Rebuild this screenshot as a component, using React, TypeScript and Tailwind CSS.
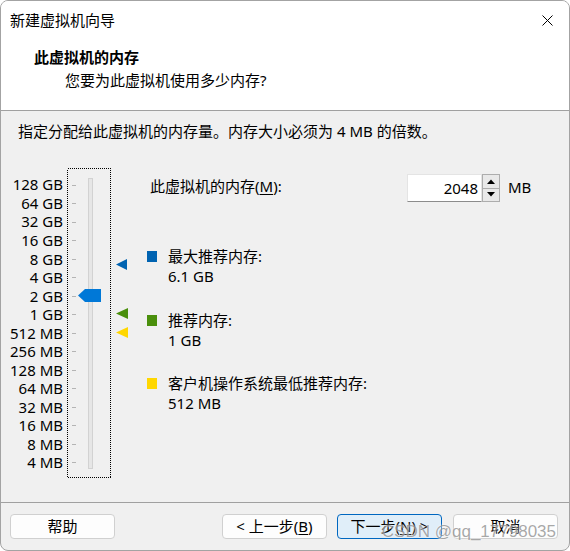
import React from 'react';

const sizes = [
  '128 GB', '64 GB', '32 GB', '16 GB', '8 GB', '4 GB', '2 GB', '1 GB',
  '512 MB', '256 MB', '128 MB', '64 MB', '32 MB', '16 MB', '8 MB', '4 MB',
];

const STEP = 18.53;

// slider drawing: dotted focus box, track, ticks, thumb and the three markers
const MemorySlider = () => (
  <svg width="63" height="310" viewBox="0 0 63 310" className="shrink-0 ml-[3px]">
    <rect x="0.5" y="0.5" width="43" height="309" fill="none" stroke="#000" strokeDasharray="1 1" shapeRendering="crispEdges" />
    <rect x="21.5" y="10.5" width="4" height="290" fill="#e6e6e6" stroke="#d2d2d2" shapeRendering="crispEdges" />
    {sizes.map((s, i) => (
      <rect key={s} x="5" y={Math.round(16.5 + i * STEP)} width="4" height="1" fill="#b4b4b4" shapeRendering="crispEdges" />
    ))}
    <polygon points="11,127.5 18,121 34,121 34,134 18,134" fill="#0078d7" />
    <polygon points="49,96.5 60,91 60,102" fill="#0063b1" />
    <polygon points="49,145.5 61,140 61,151" fill="#4a8f0c" />
    <polygon points="49,164.5 61,159 61,170" fill="#ffd700" />
  </svg>
);

const Legend = ({ color, title, value, className }: { color: string; title: string; value: string; className: string }) => (
  <div className={`flex items-start ${className}`}>
    <span className={`w-[10px] h-[11px] mt-[5px] shrink-0 ${color}`}></span>
    <div className="ml-[11px] leading-[20px]">
      <div>{title}</div>
      <div>{value}</div>
    </div>
  </div>
);

const Spinner = () => (
  <div className="w-[18px] h-[28px] flex flex-col border border-[#adadad] bg-[#e9e9e9]">
    <div className="flex-1 flex items-center justify-center border-b border-[#adadad]">
      <svg width="8" height="5" viewBox="0 0 8 5"><polygon points="0,5 4,0.5 8,5" fill="#000" /></svg>
    </div>
    <div className="flex-1 flex items-center justify-center">
      <svg width="8" height="5" viewBox="0 0 8 5"><polygon points="0,0 8,0 4,4.5" fill="#000" /></svg>
    </div>
  </div>
);

const App = () => {
  return (
    <div className="w-[570px] h-[551px] bg-[#f0f0f0] border border-[#a3a3a3] rounded-[8px] overflow-hidden flex flex-col relative text-[15px] text-black font-['Noto_Sans','Noto_Sans_CJK_SC',sans-serif]">
      {/* en-tête */}
      <div className="h-[110px] shrink-0 bg-white border-b border-[#a0a0a0]">
        <div className="h-[38px] flex items-center justify-between pl-[9px] pr-[16px]">
          <span className="leading-[20px]">新建虚拟机向导</span>
          <svg width="11" height="11" viewBox="0 0 11 11">
            <path d="M0.5 0.5 L10.5 10.5 M10.5 0.5 L0.5 10.5" stroke="#000" strokeWidth="1" />
          </svg>
        </div>
        <div className="mt-[8px] pl-[33px] leading-[20px] font-bold">此虚拟机的内存</div>
        <div className="mt-[3px] pl-[64px] leading-[20px]">您要为此虚拟机使用多少内存?</div>
      </div>

      {/* contenu */}
      <div className="flex-1 pt-[10px]">
        <div className="pl-[17px] leading-[20px]">指定分配给此虚拟机的内存量。内存大小必须为 4 MB 的倍数。</div>
        <div className="mt-[27px] flex items-start">
          <div className="w-[63px] shrink-0 pt-[7.7px] pr-[1px]">
            {sizes.map((s) => (
              <div key={s} className="h-[18.53px] flex items-center justify-end leading-none whitespace-nowrap">{s}</div>
            ))}
          </div>
          <MemorySlider />
          <div className="ml-[17px] flex-1">
            <div className="mt-[6px] flex items-start h-[28px]">
              <div className="w-[260px] pl-[3px] mt-[2px] leading-[20px]">
                此虚拟机的内存(<span className="underline underline-offset-2">M</span>):
              </div>
              <div className="w-[75px] h-[28px] bg-white border border-[#e4e4e4] border-b-[#8c8c8c] flex items-center justify-end pr-[3px] leading-none">
                2048
              </div>
              <Spinner />
              <div className="ml-[8px] mt-[3px] leading-[20px]">MB</div>
            </div>
            <Legend className="mt-[44px]" color="bg-[#0063b1]" title="最大推荐内存:" value="6.1 GB" />
            <Legend className="mt-[24px]" color="bg-[#4a8f0c]" title="推荐内存:" value="1 GB" />
            <Legend className="mt-[23px]" color="bg-[#ffd700]" title="客户机操作系统最低推荐内存:" value="512 MB" />
          </div>
        </div>
      </div>

      {/* pied */}
      <div className="h-[48px] shrink-0 border-t border-[#a0a0a0] flex items-start pt-[11px] pl-[9px] pr-[11px]">
        <button className="w-[105px] h-[25px] bg-[#fdfdfd] border border-[#d0d0d0] rounded-[4px] leading-none">帮助</button>
        <div className="ml-auto flex">
          <button className="w-[105px] h-[25px] bg-[#fdfdfd] border border-[#d0d0d0] rounded-[4px] leading-none mr-[10px]">
            &lt; 上一步(<span className="underline underline-offset-2">B</span>)
          </button>
          <button className="w-[105px] h-[25px] bg-[#e0eef9] border border-[#0067c0] rounded-[4px] leading-none mr-[11px]">
            下一步(<span className="underline underline-offset-2">N</span>) &gt;
          </button>
          <button className="w-[105px] h-[25px] bg-[#fdfdfd] border border-[#d0d0d0] rounded-[4px] leading-none">取消</button>
        </div>
      </div>

      {/* filigrane */}
      <div className="absolute right-[13px] bottom-[10px] text-[17px] leading-none font-['Liberation_Sans',sans-serif] text-[#6e6e6e]/60 [text-shadow:0_0_2px_#fff]">
        CSDN @qq_17798035
      </div>
    </div>
  );
};

export default App;
